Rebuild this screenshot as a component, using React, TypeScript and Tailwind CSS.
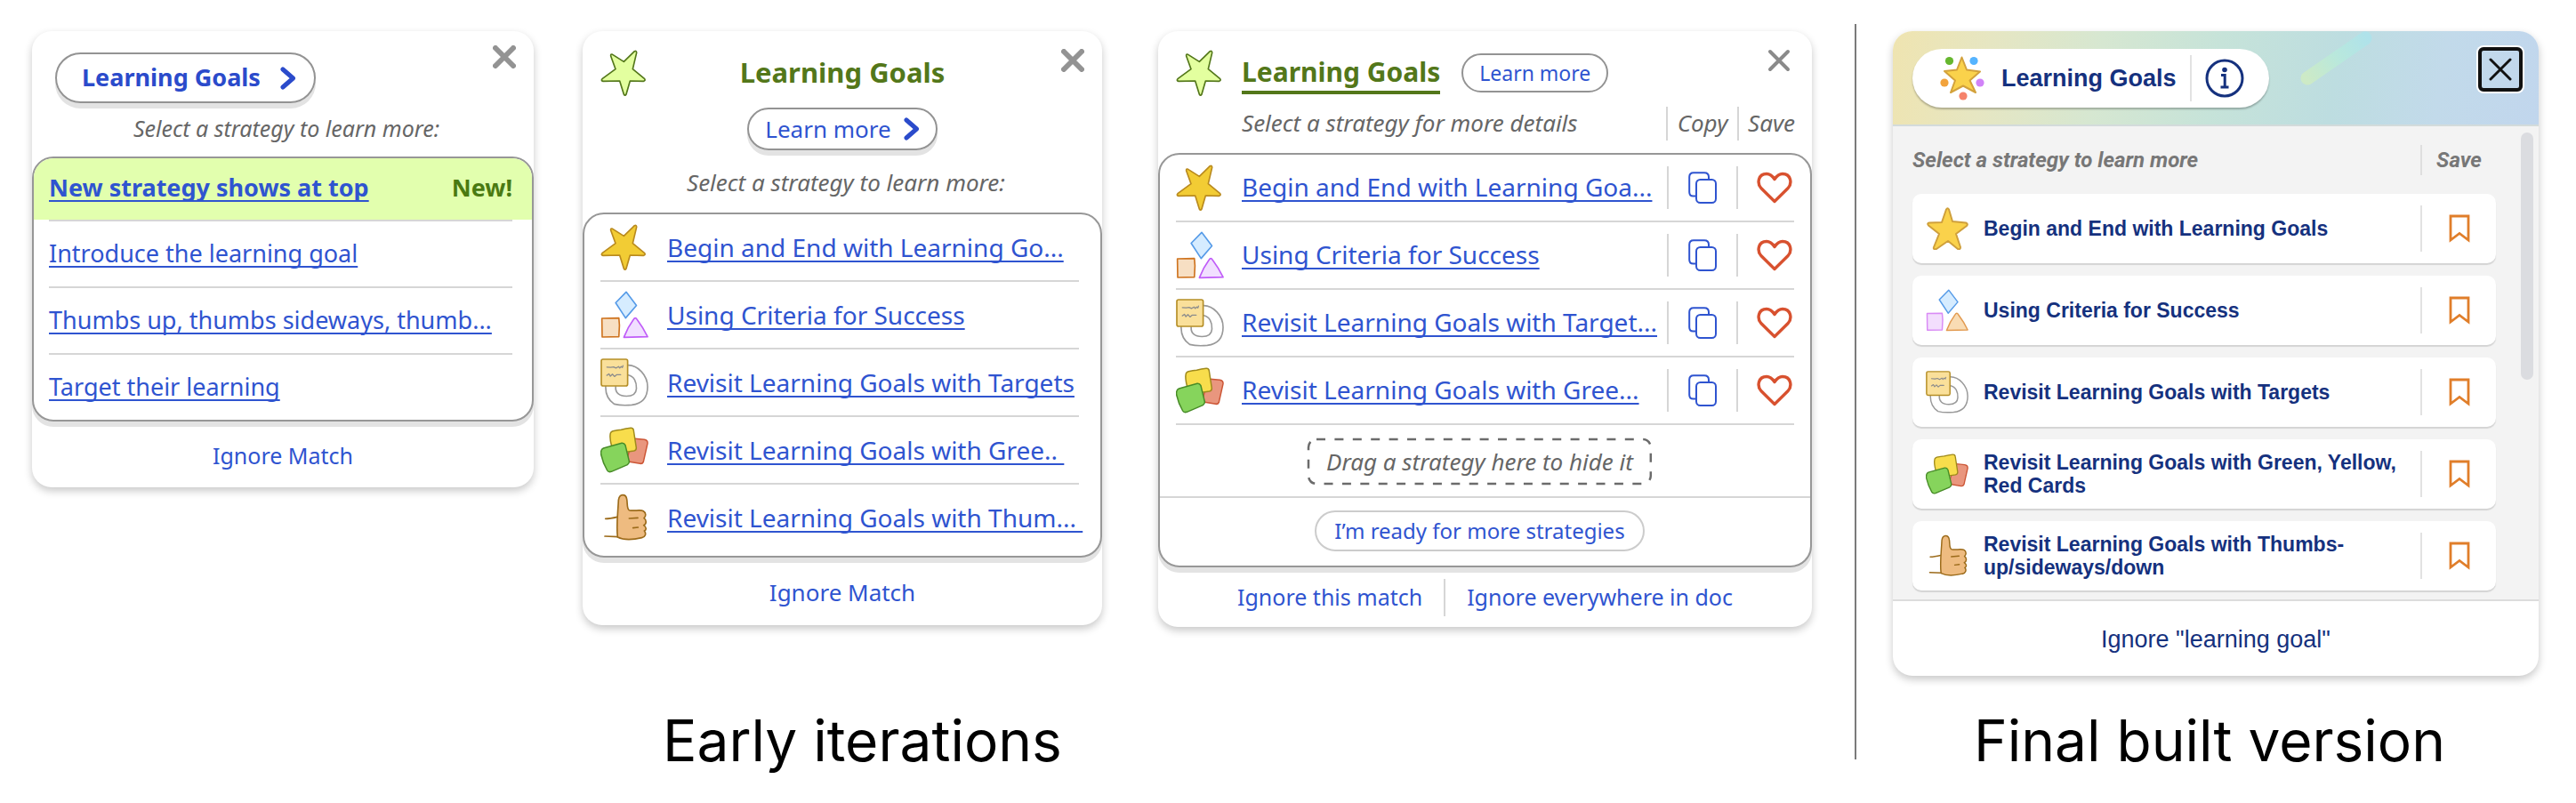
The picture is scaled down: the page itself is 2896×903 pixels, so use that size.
import type { ReactNode } from 'react';

type IconProps = { className?: string };

function StarIcon({ className = '', fill, stroke }: IconProps & { fill: string; stroke: string }) {
  return (
    <svg viewBox="45 35 162 162" className={className} aria-hidden="true">
      <path
        d="M86 54 L124 78 L160 43 Q167 40 167 48 L154 103 L194 136 Q198 142 190 144 L145 143 L132 188 Q128 195 124 188 L110 143 L54 144 Q46 142 51 136 L96 103 L80 59 Q79 51 86 54 Z"
        fill={fill}
        stroke={stroke}
        strokeWidth="5"
        strokeLinejoin="round"
      />
    </svg>
  );
}

function UprightStar({ className = '' }: IconProps) {
  return (
    <svg viewBox="0 0 48 48" className={className} aria-hidden="true">
      <path
        d="M26 2.500 L30 16 L45 17.500 Q48 19 46 21 L34 30 L39 45 Q39 48 36 47 L25 38 L12 47 Q8 48 9 45 L15 30 L3 20.500 Q1 18 4 17.500 L18 17 L23 2.500 Q24.500 0 26 2.500 Z"
        fill="#fad24b"
        stroke="#cfa03c"
        strokeWidth="2"
        strokeLinejoin="round"
      />
    </svg>
  );
}

function SparkleStar({ className = '' }: IconProps) {
  return (
    <svg viewBox="0 0 50 50" className={className} aria-hidden="true">
      <circle cx="10.5" cy="5.5" r="4.6" fill="#66b72f" />
      <circle cx="38" cy="5.5" r="4.6" fill="#55b4ff" />
      <circle cx="5" cy="30" r="4.6" fill="#f2a33c" />
      <circle cx="45" cy="30" r="4.6" fill="#d183f8" />
      <circle cx="26" cy="45" r="4.6" fill="#f5836b" />
      <path
        d="M24.500 1.500 L30 15.500 L45 17.500 L33.500 27.500 L40 41 L26 33.500 L12 41 L17 27.500 L5 17 L19 15.500 Z"
        fill="#fad24b"
        stroke="#d3a23c"
        strokeWidth="2"
        strokeLinejoin="round"
      />
    </svg>
  );
}

function ShapesIcon({ className = '', swapped = false }: IconProps & { swapped?: boolean }) {
  const orange = { fill: '#f7dfc3', stroke: '#cf7420' };
  const purple = { fill: '#f1dfff', stroke: '#c05cf8' };
  const square = swapped ? { fill: '#f3defd', stroke: '#d98af5' } : orange;
  const triangle = swapped ? { fill: '#f9dcb4', stroke: '#e29a50' } : purple;
  return (
    <svg viewBox="45 264 164 162" className={className} aria-hidden="true" strokeWidth="5" strokeLinejoin="round">
      <path d="M133 267 L168 313 L131 356 L97 304 Z" fill="#d6ecff" stroke="#569be8" />
      <path d="M50 357 L108 356 L110 381 L108 420 L51 421 Z" {...square} />
      <path d="M158 361 Q164 351 170 361 Q192 390 206 420 L125 422 Q138 388 158 361 Z" {...triangle} />
    </svg>
  );
}

function TargetIcon({ className = '' }: IconProps) {
  return (
    <svg viewBox="45 491 164 164" className={className} aria-hidden="true" fill="none" strokeWidth="5" strokeLinecap="round" strokeLinejoin="round">
      <path d="M140 514 C172 514 206 548 206 588 C206 628 184 646 152 650 C130 652 108 651 92 647 C70 632 62 610 63 586" stroke="#999" />
      <path d="M140 548 C160 552 169 572 168 594 C167 612 154 620 134 620 C108 620 96 608 97 588" stroke="#999" />
      <rect x="48" y="494" width="90" height="91" rx="6" fill="#fae09a" stroke="#b58e26" />
      <path d="M67 521 L80 522 L90 520 L98 524 L107 519 L111 524 L116 519 L120 522 L122 516" stroke="#8c8c8c" strokeWidth="4" />
      <path d="M67 549 L74 544 L79 552 L86 545 L93 553 L100 547 L114 547" stroke="#8c8c8c" strokeWidth="4" />
    </svg>
  );
}

function CardsIcon({ className = '' }: IconProps) {
  return (
    <svg viewBox="42 726 162 162" className={className} aria-hidden="true" strokeWidth="4.500" strokeLinejoin="round">
      <path d="M150 768 L190 772 Q202 774 201 785 L187 847 Q184 854 176 853 L130 845 Z" fill="#e9967e" stroke="#cc5636" />
      <path d="M84 743 Q100 740 112 739 Q128 735 144 733 Q153 732 154 741 L163 800 Q163 808 155 810 L110 817 L80 795 Q72 765 76 750 Q78 745 84 743 Z" fill="#f8dd4c" stroke="#9f8a1d" />
      <path d="M52 801 L114 784 Q122 783 126 791 L139 845 Q140 852 133 857 L79 880 Q69 883 65 876 Q50 850 44 822 Q42 805 52 801 Z" fill="#86d45c" stroke="#478b27" />
    </svg>
  );
}

function ThumbIcon({ className = '' }: IconProps) {
  return (
    <svg viewBox="45 953 162 162" className={className} aria-hidden="true" fill="none" stroke="#9c6b1a" strokeWidth="5" strokeLinecap="round" strokeLinejoin="round">
      <path d="M62 1038 C75 1038 85 1036 102 1032 M60 1097 L104 1099" />
      <path
        d="M103 1100 C98 1060 104 1020 106 975 C109 952 131 953 134 972 C137 985 133 1004 142 1009 C155 1014 180 1006 190 1012 C200 1018 199 1030 192 1036 C201 1042 201 1056 191 1060 C202 1068 200 1076 193 1079 C201 1088 196 1100 185 1102 C160 1108 130 1114 103 1100 Z"
        fill="#eebb80"
      />
      <path d="M142 1037 L171 1035 M155 1069 L172 1067" />
    </svg>
  );
}

function CopyIcon() {
  return (
    <svg viewBox="0 0 32 36" className="h-9 w-8" fill="none" stroke="#2f54d0" strokeWidth="2" strokeLinejoin="round" aria-hidden="true">
      <path d="M9 27.500 H5.500 Q1.200 27.500 1.200 23 V6 Q1.200 1.200 6 1.200 H18 Q23 1.200 23 6 V8.500" />
      <rect x="9" y="9" width="22" height="26" rx="4.500" />
    </svg>
  );
}

function HeartIcon() {
  return (
    <svg viewBox="0 0 40 36" className="h-9 w-10" fill="none" stroke="#d8512f" strokeWidth="3.400" strokeLinejoin="round" aria-hidden="true">
      <path d="M20 33.500 L4.800 18.500 C0 13 1.500 2.500 11 2.500 C15.500 2.500 18 5.500 20 8.500 C22 5.500 24.500 2.500 29 2.500 C38.500 2.500 40 13 35.200 18.500 Z" />
    </svg>
  );
}

function BookmarkIcon() {
  return (
    <svg viewBox="0 0 24 32" className="h-8 w-6" fill="none" stroke="#e07e2a" strokeWidth="2.800" aria-hidden="true">
      <path d="M2 2 H22 V29 L12 21.500 L2 29 Z" />
    </svg>
  );
}

function Chevron() {
  return (
    <svg viewBox="0 0 18 26" className="h-[26px] w-[18px]" fill="none" stroke="#2b4bcb" strokeWidth="5" strokeLinecap="round" strokeLinejoin="round" aria-hidden="true">
      <path d="M3 3 L14.500 13 L3 23" />
    </svg>
  );
}

function CloseButton({ weight = 6, className = 'text-[#939393]' }: { weight?: number; className?: string }) {
  return (
    <button type="button" aria-label="Close" className={className}>
      <svg viewBox="0 0 26 26" className="h-[26px] w-[26px]" fill="none" stroke="currentColor" strokeWidth={weight} strokeLinecap="round" aria-hidden="true">
        <path d="M3 3 L23 23 M23 3 L3 23" />
      </svg>
    </button>
  );
}

function StrategyLink({ children, className = 'text-[28px]' }: { children: ReactNode; className?: string }) {
  return (
    <a
      href="#"
      className={`${className} whitespace-nowrap text-[#2f54d0] underline decoration-2 underline-offset-4 [text-decoration-skip-ink:none]`}
    >
      {children}
    </a>
  );
}

const card = 'min-w-0 rounded-[22px] bg-white shadow-[0_4px_10px_rgba(0,0,0,0.22)]';
const listBox = 'rounded-[24px] border-2 border-[#979797] bg-white shadow-[0_6px_0_#e3e3e3]';
const rule = 'h-0.5 bg-[#d6d6d6]';
const icon = 'h-[54px] w-[54px] shrink-0';
const gold = { fill: '#f2cc34', stroke: '#b98a1e' };
const lime = { fill: '#e3ff9f', stroke: '#53771a' };

function FirstIteration() {
  const items = ['Introduce the learning goal', 'Thumbs up, thumbs sideways, thumb...', 'Target their learning'];
  return (
    <article className={card}>
      <div className="flex items-start justify-between pt-4 pr-5 pl-[26px]">
        <button type="button" className="mt-2 flex h-[57px] items-center gap-[22px] rounded-full border-2 border-[#939393] pr-5 pl-7 text-[27px] font-bold text-[#2b4bcb] shadow-[0_6px_0_#e3e3e3]">
          Learning Goals
          <Chevron />
        </button>
        <CloseButton />
      </div>
      <p className="mt-2.5 mb-3.5 pl-2 text-center text-[25px] leading-9 text-[#666] italic">Select a strategy to learn more:</p>
      <ul className={`${listBox} overflow-hidden`}>
        <li className="flex h-[69px] items-center justify-between bg-[#e2ffae] pr-[22px] pb-0.5 pl-[17px]">
          <StrategyLink className="text-[27px] font-bold">New strategy shows at top</StrategyLink>
          <span className="text-[27px] font-bold text-[#4a7a12]">New!</span>
        </li>
        {items.map((item) => (
          <li key={item} className="pr-[22px] pl-[17px]">
            <div className={rule} />
            <div className="flex h-[73px] items-center">
              <StrategyLink className="text-[27px]">{item}</StrategyLink>
            </div>
          </li>
        ))}
      </ul>
      <div className="flex h-[74px] items-center justify-center pt-1">
        <button type="button" className="text-[25px] text-[#2f54d0]">Ignore Match</button>
      </div>
    </article>
  );
}

function SecondIteration() {
  const items: { label: string; art: ReactNode }[] = [
    { label: 'Begin and End with Learning Go...', art: <StarIcon className={icon} {...gold} /> },
    { label: 'Using Criteria for Success', art: <ShapesIcon className={icon} /> },
    { label: 'Revisit Learning Goals with Targets', art: <TargetIcon className={icon} /> },
    { label: 'Revisit Learning Goals with Gree..\u00a0', art: <CardsIcon className={icon} /> },
    { label: 'Revisit Learning Goals with Thum...\u00a0', art: <ThumbIcon className={icon} /> },
  ];
  return (
    <article className={card}>
      <div className="flex items-start px-5 pt-5">
        <StarIcon className={icon} {...lime} />
        <h2 className="mt-[5px] flex-1 text-center text-[31px] leading-[42px] font-bold text-[#53771a]">Learning Goals</h2>
        <div className="flex w-[54px] justify-end">
          <CloseButton />
        </div>
      </div>
      <div className="mt-3 flex justify-center">
        <button type="button" className="flex h-12 items-center gap-3.5 rounded-full border-2 border-[#939393] px-[18px] text-[26px] text-[#2f54d0] shadow-[0_6px_0_#e3e3e3]">
          Learn more
          <Chevron />
        </button>
      </div>
      <p className="mt-[18px] mb-4 pl-2 text-center text-[26px] leading-9 text-[#666] italic">Select a strategy to learn more:</p>
      <ul className={`${listBox} pb-1.5`}>
        {items.map((item, i) => (
          <li key={item.label} className="pr-6 pl-[18px]">
            {i > 0 && <div className={rule} />}
            <div className="flex h-[74px] items-center gap-[21px]">
              {item.art}
              <StrategyLink>{item.label}</StrategyLink>
            </div>
          </li>
        ))}
      </ul>
      <div className="flex h-[76px] items-center justify-center pt-0.5">
        <button type="button" className="text-[26px] text-[#2f54d0]">Ignore Match</button>
      </div>
    </article>
  );
}

function ThirdIteration() {
  const items: { label: string; art: ReactNode }[] = [
    { label: 'Begin and End with Learning Goa...', art: <StarIcon className={icon} {...gold} /> },
    { label: 'Using Criteria for Success', art: <ShapesIcon className={icon} /> },
    { label: 'Revisit Learning Goals with Target...', art: <TargetIcon className={icon} /> },
    { label: 'Revisit Learning Goals with Gree...', art: <CardsIcon className={icon} /> },
  ];
  return (
    <article className={`${card} ml-2`}>
      <div className="flex items-start pt-5 pr-6 pl-5">
        <StarIcon className={icon} {...lime} />
        <h2 className="mt-[5px] ml-5 border-b-4 border-[#53771a] text-[30px] leading-[42px] font-bold text-[#53771a]">Learning Goals</h2>
        <button type="button" className="mt-[5px] ml-6 h-11 rounded-full border-2 border-[#939393] px-[18px] text-[23px] text-[#2f54d0]">
          Learn more
        </button>
        <CloseButton weight={4} className="ml-auto text-[#8a8a8a]" />
      </div>
      <div className="mt-[11px] mb-3.5 grid h-[38px] grid-cols-[1fr_80px_70px] items-stretch pr-3.5 pl-[94px] text-[26px] leading-9 text-[#666] italic">
        <p>Select a strategy for more details</p>
        <span className="border-l-2 border-[#d6d6d6] text-center">Copy</span>
        <span className="border-l-2 border-[#d6d6d6] pl-2.5">Save</span>
      </div>
      <div className={listBox}>
        <ul className="px-[18px]">
          {items.map((item) => (
            <li key={item.label}>
              <div className="grid h-[74px] grid-cols-[1fr_78px_65px] items-center">
                <div className="flex items-center gap-5">
                  {item.art}
                  <span className="pb-0.5">
                    <StrategyLink>{item.label}</StrategyLink>
                  </span>
                </div>
                <button type="button" aria-label="Copy" className="flex h-12 items-center justify-center border-l-2 border-[#d6d6d6]">
                  <CopyIcon />
                </button>
                <button type="button" aria-label="Save" className="flex h-12 items-center justify-end border-l-2 border-[#d6d6d6] pr-0.5">
                  <HeartIcon />
                </button>
              </div>
              <div className={rule} />
            </li>
          ))}
        </ul>
        <div className="flex justify-center border-b-2 border-[#d6d6d6] pt-4 pr-3 pb-3.5">
          <div className="relative flex h-[50px] items-center px-5 text-[26px] text-[#666] italic">
            <svg className="absolute inset-0 h-full w-full overflow-visible" fill="none" aria-hidden="true">
              <rect x="0" y="0" width="100%" height="100%" rx="9" stroke="#6b6b6b" strokeWidth="2.500" strokeDasharray="10 10.400" />
            </svg>
            Drag a strategy here to hide it
          </div>
        </div>
        <div className="flex justify-center pt-3.5 pr-3 pb-4">
          <button type="button" className="h-[46px] rounded-full border-2 border-[#ccc] px-5 text-[24px] text-[#2f54d0]">
            I’m ready for more strategies
          </button>
        </div>
      </div>
      <div className="flex h-[67px] items-center justify-center gap-6 text-[25px] text-[#2f54d0]">
        <button type="button">Ignore this match</button>
        <div className="h-[42px] w-0.5 bg-[#d6d6d6]" />
        <button type="button">Ignore everywhere in doc</button>
      </div>
    </article>
  );
}

function FinalVersion() {
  const small = 'h-12 w-12 shrink-0';
  const items: { label: string; art: ReactNode }[] = [
    { label: 'Begin and End with Learning Goals', art: <UprightStar className={small} /> },
    { label: 'Using Criteria for Success', art: <ShapesIcon className={small} swapped /> },
    { label: 'Revisit Learning Goals with Targets', art: <TargetIcon className={small} /> },
    { label: 'Revisit Learning Goals with Green, Yellow, Red Cards', art: <CardsIcon className={small} /> },
    { label: 'Revisit Learning Goals with Thumbs-up/sideways/down', art: <ThumbIcon className={small} /> },
  ];
  return (
    <article className={`${card} overflow-hidden font-['Liberation_Sans',Arial,sans-serif] text-[#15317e]`}>
      <header className="relative flex items-start justify-between border-b-2 border-[#d3dbdb] bg-[linear-gradient(100deg,#efe4b0_0%,#e6e6c2_15%,#d6e7d1_32%,#c6e3d9_50%,#bddde0_68%,#c2daea_84%,#c1d6ed_100%)] pt-[18px] pr-[18px] pb-[19px] pl-[22px]">
        <svg viewBox="0 0 84 64" className="absolute top-0 left-[63%] h-16 w-[84px]" fill="none" aria-hidden="true">
          <defs>
            <linearGradient id="streak" gradientUnits="userSpaceOnUse" x1="8" y1="54" x2="76" y2="6">
              <stop offset="0" stopColor="#cdeac6" />
              <stop offset="0.500" stopColor="#b9e8dc" />
              <stop offset="1" stopColor="#afe2ea" />
            </linearGradient>
          </defs>
          <path d="M9 53 L74 8" stroke="url(#streak)" strokeWidth="15" strokeLinecap="round" />
        </svg>
        <div className="mt-0.5 flex h-[66px] items-center rounded-full bg-white pr-7 pl-[31px] shadow-[0_2px_2px_rgba(0,0,0,0.25)]">
          <SparkleStar className="h-[50px] w-[50px]" />
          <h2 className="ml-[19px] text-[27px] font-bold">Learning Goals</h2>
          <div className="mx-[15px] h-[52px] w-0.5 bg-[#e2e2e2]" />
          <button type="button" aria-label="About learning goals">
            <svg viewBox="0 0 44 44" className="h-11 w-11" fill="none" stroke="#15317e" strokeWidth="3" aria-hidden="true">
              <circle cx="22" cy="22" r="20" />
              <circle cx="22" cy="12.500" r="2.800" fill="#15317e" stroke="none" />
              <path d="M18 18.500 H22.200 V32 M17.500 32 H26.500" strokeWidth="3" />
            </svg>
          </button>
        </div>
        <button type="button" aria-label="Close" className="flex h-[50px] w-[50px] items-center justify-center rounded-md border-4 border-[#111] text-[#111] ring-2 ring-white">
          <svg viewBox="0 0 26 26" className="h-[26px] w-[26px]" fill="none" stroke="currentColor" strokeWidth="3" strokeLinecap="round" aria-hidden="true">
            <path d="M2 2 L24 24 M24 2 L2 24" />
          </svg>
        </button>
      </header>
      <div className="flex bg-[#f3f3f3] pr-1.5 pb-2.5 pl-[22px]">
        <div className="flex-1">
          <div className="mt-[21px] mb-[21px] flex h-[34px] items-center font-[Roboto,sans-serif] text-[24px] leading-7 font-bold text-[#777] italic">
            <p className="flex-1">Select a strategy to learn more</p>
            <span className="flex h-full w-[85px] items-center justify-center border-l-2 border-[#dedede]">Save</span>
          </div>
          <ul className="flex flex-col gap-3.5">
            {items.map((item) => (
              <li key={item.label} className="flex h-[78px] items-center rounded-[10px] bg-white pl-[15px] shadow-[0_2px_1px_#d4d4d4]">
                {item.art}
                <a href="#" className="ml-[17px] flex-1 pr-2 text-[23px] leading-[26px] font-bold">{item.label}</a>
                <button type="button" aria-label="Save" className="flex h-[52px] w-[85px] items-center justify-center border-l-2 border-[#e2e2e2]">
                  <BookmarkIcon />
                </button>
              </li>
            ))}
          </ul>
        </div>
        <div className="mt-[7px] ml-7 h-[278px] w-3.5 rounded-full bg-[#dbdce0]" />
      </div>
      <footer className="flex h-[86px] items-center justify-center border-t-2 border-[#dcdcdc] pt-0.5">
        <button type="button" className="text-[27px]">Ignore "learning goal"</button>
      </footer>
    </article>
  );
}

const caption = 'font-[Inter,sans-serif] text-[64px] leading-[76px] whitespace-nowrap text-black';

export default function App() {
  return (
    <main className="grid grid-cols-[2085fr_2px_809fr] bg-white font-['Noto_Sans',sans-serif]">
      <section className="flex flex-col justify-between pt-[35px] pr-12 pb-8 pl-9">
        <div className="grid grid-cols-[564fr_584fr_743fr] items-start gap-x-[55px]">
          <FirstIteration />
          <SecondIteration />
          <ThirdIteration />
        </div>
        <div className="grid grid-cols-[564fr_584fr_743fr] gap-x-[55px]">
          <h1 className={`${caption} col-start-2 pl-[90px]`}>Early iterations</h1>
        </div>
      </section>
      <div className="mt-[27px] mb-[49px] bg-[#7a7a7a]" />
      <section className="flex flex-col justify-between gap-[35px] pt-[35px] pr-[42px] pb-8 pl-[41px]">
        <FinalVersion />
        <h1 className={`${caption} pr-3.5 text-center`}>Final built version</h1>
      </section>
    </main>
  );
}
